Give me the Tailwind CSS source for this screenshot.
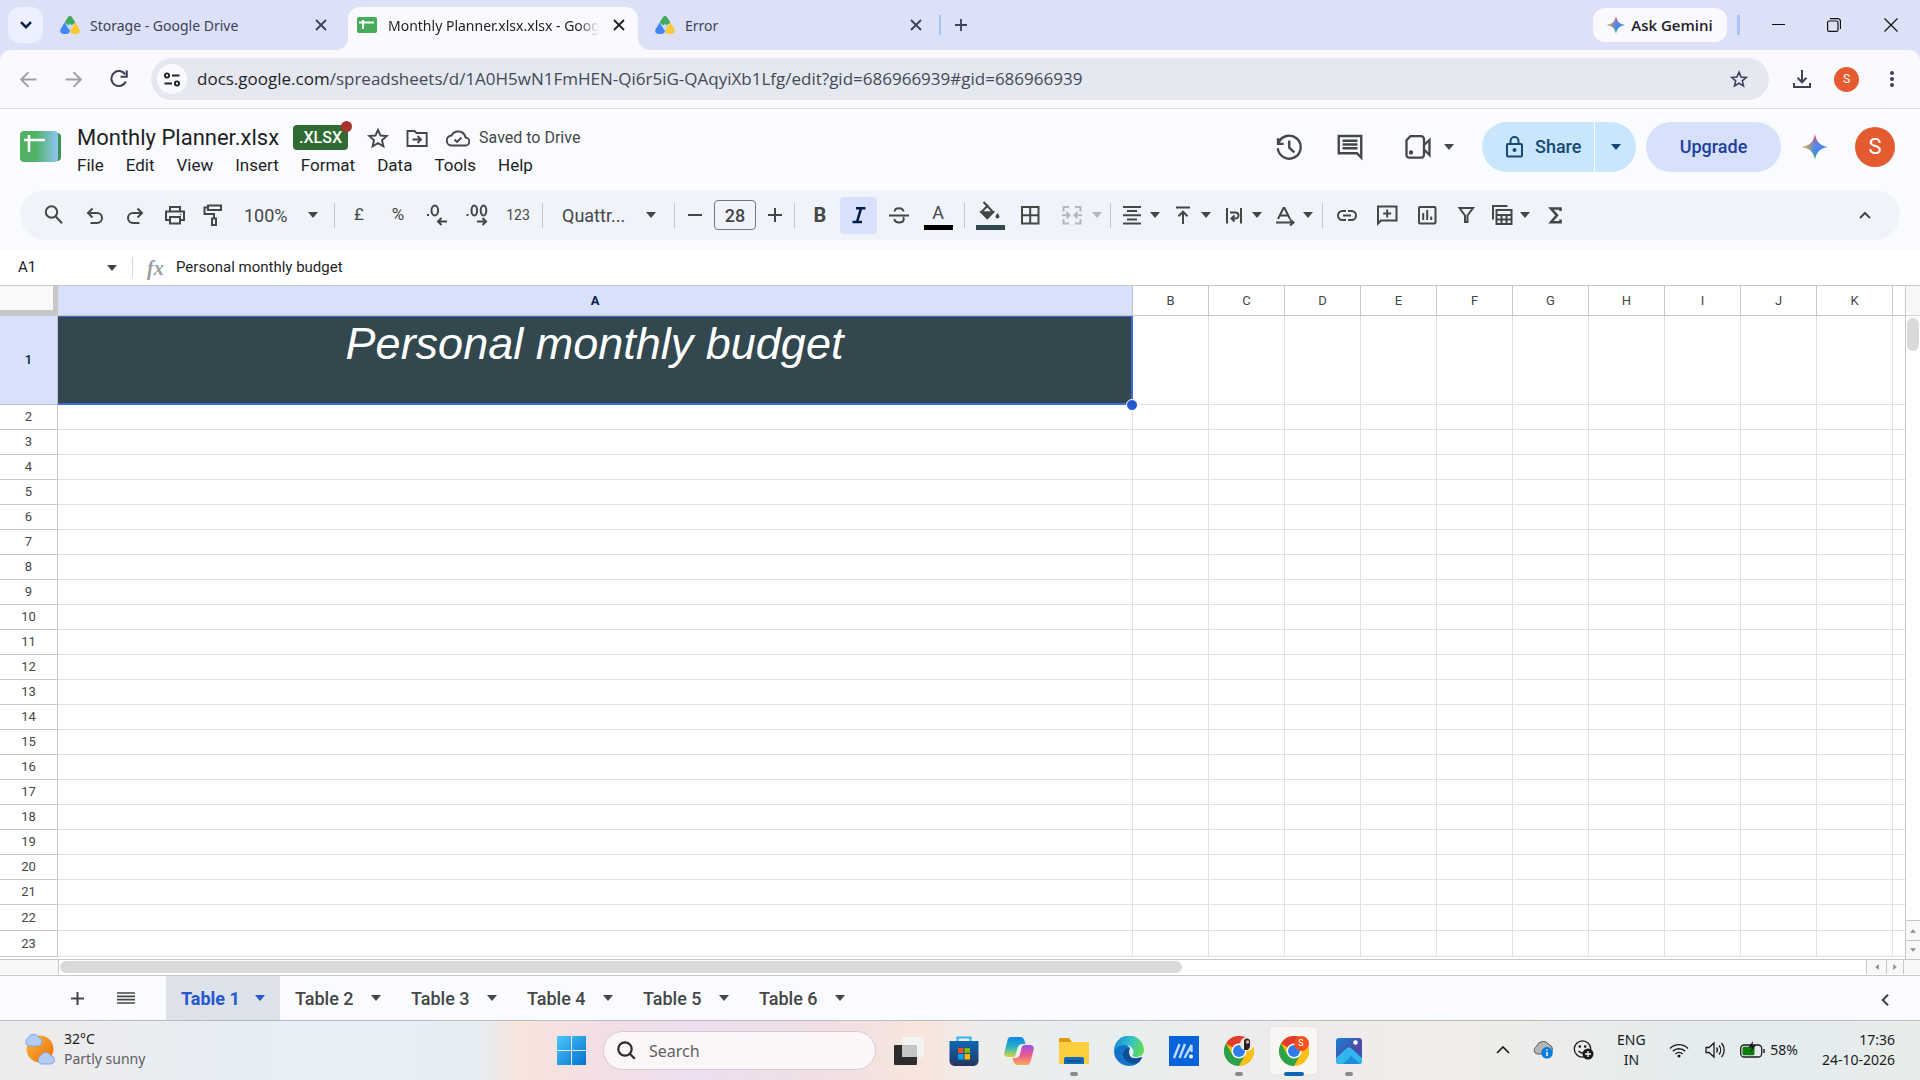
<!doctype html>
<html lang="en">

<head>
    <meta charset="UTF-8">
    <meta name="viewport" content="width=device-width, initial-scale=1.0">
    <script src="https://cdn.jsdelivr.net/npm/@tailwindcss/browser@4"></script>
    <title>Monthly Planner.xlsx - Google Sheets</title>
</head>

<body class="min-h-screen flex flex-col bg-white text-[#1f1f1f] font-['Roboto',sans-serif] overflow-hidden">
    <!-- Shared icons -->
    <svg class="absolute size-0">
        <defs>
            <linearGradient id="gemV" x1="0" y1="0" x2="0" y2="1">
                <stop offset="0" stop-color="#f23b34" />
                <stop offset=".4" stop-color="#5a86ea" />
                <stop offset=".65" stop-color="#4285f4" />
                <stop offset="1" stop-color="#34b853" />
            </linearGradient>
            <linearGradient id="gemH" x1="0" y1="0" x2="1" y2="0">
                <stop offset="0" stop-color="#fbbc04" />
                <stop offset=".5" stop-color="#fbbc04" stop-opacity="0" />
            </linearGradient>
            <linearGradient id="winFill" x1="0" y1="0" x2="1" y2="1">
                <stop offset="0" stop-color="#4cc8fb" />
                <stop offset="1" stop-color="#0370ce" />
            </linearGradient>
        </defs>
        <symbol id="arrow" viewBox="0 0 10 6">
            <path d="M0 0h10L5 6z" fill="currentColor" />
        </symbol>
        <symbol id="cross" viewBox="0 0 12 12">
            <path d="M1 1l10 10M11 1L1 11" stroke="currentColor" stroke-width="1.8" fill="none" />
        </symbol>
        <symbol id="drive" viewBox="0 0 20 20">
            <path d="M4.6 7.5L0.6 14.2C-.6 17 .8 19 3.500 19h3c2 0 3.500-1.500 3.500-3.500z" fill="#4285f4" />
            <path d="M15.400 7.500l4 6.700C20.600 17 19.200 19 16.500 19h-3c-2 0-3.500-1.500-3.500-3.500z" fill="#fcc934" />
            <path d="M4.600 7.500L7.800 2.500C8.900.6 11.100.6 12.200 2.500l3.200 5-3.200 2.500H7.800z" fill="#41ab5d" />
            <path d="M7.300 12L10 8.500 12.700 12 10 15.500z" fill="#c7daf9" />
        </symbol>
        <symbol id="gemini" viewBox="0 0 24 24">
            <path d="M12 0c1 7 5 11 12 12-7 1-11 5-12 12-1-7-5-11-12-12C7 11 11 7 12 0z" fill="url(#gemV)" />
            <path d="M12 0c1 7 5 11 12 12-7 1-11 5-12 12-1-7-5-11-12-12C7 11 11 7 12 0z" fill="url(#gemH)" />
        </symbol>
        <symbol id="star" viewBox="0 0 24 24">
            <path d="M12 3.800l2.500 5.700 6.200.600-4.700 4.100 1.400 6.100L12 17.100l-5.400 3.200L8 14.200 3.300 10.100l6.200-.600z"
                fill="none" stroke="currentColor" stroke-width="1.900" />
        </symbol>
        <symbol id="chrome" viewBox="0 0 30 30">
            <circle cx="15" cy="15" r="15" fill="#fbbc04" />
            <path d="M15 15L2 7.500A15 15 0 0 1 28 7.500H15z" fill="#e33b2e" />
            <path d="M2 7.500A15 15 0 0 0 15 30l6.500-11.200L15 15 8.500 18.800z" fill="#2ba24c" />
            <path d="M21.500 18.800L15 30A15 15 0 0 0 28 7.500H15z" fill="#fbc116" />
            <circle cx="15" cy="15" r="7.500" fill="#fff" />
            <circle cx="15" cy="15" r="6" fill="#2f7de9" />
        </symbol>
    </svg>

    <!-- Browser tabs -->
    <div class="h-[50px] flex items-center pl-2 bg-[#dce1f7] text-[#3c4257] font-['Noto_Sans',sans-serif] text-[14px]">
        <button aria-label="Search tabs" class="w-[35px] h-9 rounded-xl bg-[#edf0fe] flex items-center justify-center">
            <svg class="w-3 h-2" viewBox="0 0 12 8" fill="none" stroke="#041e49" stroke-width="2.400"><path d="M1 1.200l5 5 5-5" /></svg>
        </button>
        <div class="w-[305px] h-full pl-[17px] pr-[21px] flex items-center">
            <svg class="size-5"><use href="#drive" /></svg>
            <span class="ml-[10px] flex-1 whitespace-nowrap">Storage - Google Drive</span>
            <button aria-label="Close tab"><svg class="size-3"><use href="#cross" /></svg></button>
        </div>
        <div class="relative w-[290px] h-[43px] self-end rounded-t-xl bg-[#faf9ff] text-[#1f1f1f] pl-[9px] pr-[13px] pb-[7px] flex items-center">
            <svg class="absolute -left-3 bottom-0 size-3" viewBox="0 0 12 12"><path d="M12 0v12H0A12 12 0 0 0 12 0z" fill="#faf9ff" /></svg>
            <svg class="absolute -right-3 bottom-0 size-3" viewBox="0 0 12 12"><path d="M0 0v12h12A12 12 0 0 1 0 0z" fill="#faf9ff" /></svg>
            <svg class="w-5 h-4" viewBox="0 0 20 16">
                <rect width="20" height="16" rx="2" fill="#45ac58" />
                <path d="M2 5.500h15M6 3v9" stroke="#fff" stroke-width="2" />
            </svg>
            <span class="ml-[11px] w-[211px] overflow-hidden whitespace-nowrap mask-r-from-90%">Monthly Planner.xlsx.xlsx - Google Sheets</span>
            <button aria-label="Close tab" class="ml-auto"><svg class="size-3"><use href="#cross" /></svg></button>
        </div>
        <div class="w-[301px] h-full pl-[17px] pr-[17px] flex items-center">
            <svg class="size-5"><use href="#drive" /></svg>
            <span class="ml-[10px] flex-1">Error</span>
            <button aria-label="Close tab"><svg class="size-3"><use href="#cross" /></svg></button>
        </div>
        <span class="w-0.5 h-5 bg-[#a8c2fb]"></span>
        <button aria-label="New tab" class="ml-[14px]">
            <svg class="size-3" viewBox="0 0 12 12" stroke="currentColor" stroke-width="1.800"><path d="M6 0v12M0 6h12" /></svg>
        </button>
        <button class="ml-auto h-[34px] w-[134px] rounded-xl bg-[#faf9ff] text-[#1f1f1f] font-semibold flex items-center justify-center gap-1.5 text-[15px] font-['Open_Sans',sans-serif]">
            <svg class="size-[18px]"><use href="#gemini" /></svg>Ask Gemini
        </button>
        <span class="ml-[10px] w-[3px] h-5 bg-[#a8c2fb]"></span>
        <div class="ml-[10px] flex text-[#111]">
            <button aria-label="Minimize" class="w-14 h-9 flex items-center justify-center">
                <svg class="w-[13px] h-3" viewBox="0 0 13 12" stroke="currentColor"><path d="M0 5.500h13" /></svg>
            </button>
            <button aria-label="Restore" class="w-14 h-9 flex items-center justify-center">
                <svg class="size-[14px]" viewBox="0 0 14 14" fill="none" stroke="currentColor" stroke-width="1.200">
                    <rect x=".6" y="3" width="10.400" height="10.400" rx="1.500" />
                    <path d="M3 .6h7.500a3 3 0 0 1 3 3V11" />
                </svg>
            </button>
            <button aria-label="Close window" class="w-[58px] h-9 flex items-center justify-center">
                <svg class="size-[14px]" viewBox="0 0 14 14" stroke="currentColor" stroke-width="1.200"><path d="M.5.5l13 13M13.500.5l-13 13" /></svg>
            </button>
        </div>
    </div>

    <!-- Address bar -->
    <div class="bg-[#dce1f7]">
        <div class="h-[59px] flex items-center rounded-t-[10px] bg-[#faf9ff] border-b border-[#dcdfe5] text-[#3c4257] pl-[6px] pr-1.5">
            <button aria-label="Back" class="w-[45px] flex justify-center text-[#9fa0a8]">
                <svg class="size-[17px]" viewBox="0 0 17 17" fill="none" stroke="currentColor" stroke-width="1.900"><path d="M16.500 8.500H1.500M8.500 1.200L1.200 8.500l7.300 7.300" /></svg>
            </button>
            <button aria-label="Forward" class="w-[45px] flex justify-center text-[#9fa0a8]">
                <svg class="size-[17px]" viewBox="0 0 17 17" fill="none" stroke="currentColor" stroke-width="1.900"><path d="M.5 8.500h15M8.500 1.200l7.300 7.300-7.300 7.300" /></svg>
            </button>
            <button aria-label="Reload" class="w-[45px] flex justify-center">
                <svg class="size-[18px]" viewBox="0 0 18 18" fill="none" stroke="currentColor" stroke-width="2"><path d="M15.800 11.500A7.500 7.500 0 1 1 15.200 4.500M16.800.5v6.300h-6.300" /></svg>
            </button>
            <div class="ml-[10px] flex-1 h-[42px] rounded-full bg-[#e5e8f1] pl-1.5 pr-5 flex items-center">
                <button aria-label="Site information" class="size-[30px] rounded-full bg-[#faf9ff] flex items-center justify-center text-[#1f1f1f]">
                    <svg class="w-4 h-[15px]" viewBox="0 0 16 15" fill="none" stroke="currentColor" stroke-width="1.900">
                        <circle cx="3" cy="3.500" r="2.100" /><path d="M8 3.500h7.500M.5 11.500H8" /><circle cx="13" cy="11.500" r="2.100" />
                    </svg>
                </button>
                <div class="ml-[10px] flex-1 font-['Open_Sans',sans-serif] text-[17px] text-[#444955] whitespace-nowrap"><span class="text-[#1f1f1f]">docs.google.com</span>/spreadsheets/d/1A0H5wN1FmHEN-Qi6r5iG-QAqyiXb1Lfg/edit?gid=686966939#gid=686966939</div>
                <button aria-label="Bookmark this tab"><svg class="size-5"><use href="#star" /></svg></button>
            </div>
            <button aria-label="Downloads" class="ml-[10px] w-[45px] flex justify-center">
                <svg class="size-[18px]" viewBox="0 0 18 18" fill="none" stroke="currentColor" stroke-width="2"><path d="M9 0v12M4.500 7.800L9 12.300l4.500-4.500M1 13v4h16v-4" /></svg>
            </button>
            <button aria-label="Profile" class="ml-[10px] size-[25px] rounded-full bg-[#e35b2f] text-white text-[12px]">S</button>
            <button aria-label="Menu" class="ml-[10px] w-[45px] flex justify-center">
                <svg class="w-1 h-4" viewBox="0 0 4 16" fill="currentColor"><circle cx="2" cy="2" r="2" /><circle cx="2" cy="8" r="2" /><circle cx="2" cy="14" r="2" /></svg>
            </button>
        </div>
    </div>

    <div class="bg-[#f9fbff] pb-[10px]">
        <!-- Document header -->
        <header class="h-[81px] flex items-center pl-5 pr-[25px] pb-[6px] text-[#444746]">
            <svg class="w-[41px] h-[31px]" viewBox="0 0 41 31">
                <defs>
                    <linearGradient id="logoFill"><stop offset=".4" stop-color="#4fb163" /><stop offset="1" stop-color="#8fc4f8" /></linearGradient>
                </defs>
                <rect x="5" y="2" width="36" height="28" rx="4" fill="#3c9450" />
                <rect width="38" height="31" rx="4" fill="url(#logoFill)" />
                <path d="M4 9h21M9 4v17" stroke="#fff" stroke-width="2.600" />
            </svg>
            <div class="ml-4 mt-[10px]">
                <div class="h-7 flex items-center">
                    <h1 class="text-[22px] leading-7 text-[#1f1f1f]">Monthly Planner.xlsx</h1>
                    <span class="relative ml-[14px] w-[55px] h-[25px] rounded bg-[#2f6b33] text-white text-[16px] font-medium flex items-center justify-center">.XLSX
                        <span class="absolute -right-1 -top-1 size-[11px] rounded-full bg-[#a8332a]"></span>
                    </span>
                    <button aria-label="Star" class="ml-[18px]"><svg class="size-6"><use href="#star" /></svg></button>
                    <button aria-label="Move" class="ml-[15px]">
                        <svg class="size-6" viewBox="0 0 24 24" fill="none" stroke="currentColor" stroke-width="1.900"><path d="M2.500 20V5h7l2 2h10.200v13zM7.500 13.500h8M12.500 10l3.500 3.500-3.500 3.500" /></svg>
                    </button>
                    <button aria-label="Document status" class="ml-[17px] flex items-center gap-[9px] text-[16px]">
                        <svg class="size-6" viewBox="0 0 24 24" fill="none" stroke="currentColor" stroke-width="1.900"><path d="M6 19.500h13a4 4 0 0 0 .5-8A7.500 7.500 0 0 0 5.500 9.500 5 5 0 0 0 6 19.500zM8.500 13.500l2.500 2.500 4.500-4.500" /></svg>
                        Saved to Drive
                    </button>
                </div>
                <nav class="h-7 flex items-center gap-[22px] text-[17px] text-[#1f1f1f]">
                    <button>File</button>
                    <button>Edit</button>
                    <button>View</button>
                    <button>Insert</button>
                    <button>Format</button>
                    <button>Data</button>
                    <button>Tools</button>
                    <button>Help</button>
                </nav>
            </div>
            <button aria-label="Version history" class="ml-auto w-[62px] flex justify-center">
                <svg class="size-[30px]" viewBox="0 0 24 24" fill="none" stroke="currentColor" stroke-width="1.900"><path d="M3.200 5v4.500h4.500M3.500 9A9.200 9.200 0 1 1 3 13M12.200 6.800v5.700l4 3.800" /></svg>
            </button>
            <button aria-label="Comments" class="w-[60px] flex justify-center">
                <svg class="size-[30px]" viewBox="0 0 24 24" fill="none" stroke="currentColor" stroke-width="1.900"><path d="M3 3.200h18v17.300l-3.500-3.500H3zM6 7h12M6 10h12M6 13h12" /></svg>
            </button>
            <button aria-label="Join a call" class="ml-[25px] mr-[28px] flex items-center gap-[13px]">
                <svg class="w-[26px] h-[26px]" viewBox="0 0 26 26" fill="none" stroke="currentColor" stroke-width="2.300"><path d="M5.500 2.200h10.500a3 3 0 0 1 3 3v15.500a3 3 0 0 1-3 3h-12a2.500 2.500 0 0 1-2.500-2.500V6.200zM19 11l5.500-5v15L19 15.500" /><circle cx="6" cy="18.500" r="1" fill="currentColor" /></svg>
                <svg class="w-[10px] h-[6px]"><use href="#arrow" /></svg>
            </button>
            <div class="h-[50px] flex rounded-full overflow-hidden bg-[#c9e6fd] text-[#164a77]">
                <button class="w-[112px] pl-6 flex items-center gap-3 text-[18px] font-medium">
                    <svg class="w-[17px] h-[22px]" viewBox="0 0 17 22" fill="none" stroke="currentColor" stroke-width="2"><rect x="1" y="8" width="15" height="12.500" rx="1" /><path d="M4.500 8V5a4 4 0 0 1 8 0v3" /><circle cx="8.500" cy="14" r="1" fill="currentColor" /></svg>
                    Share
                </button>
                <button aria-label="Share options" class="w-[42px] border-l border-white flex items-center justify-center">
                    <svg class="w-[10px] h-[6px]"><use href="#arrow" /></svg>
                </button>
            </div>
            <button class="ml-[10px] w-[135px] h-[50px] rounded-full bg-[#d7e1fb] text-[#1d3f9e] text-[18px] font-medium">Upgrade</button>
            <button aria-label="Gemini" class="ml-[21px]"><svg class="size-[26px]"><use href="#gemini" /></svg></button>
            <button aria-label="Account" class="ml-[27px] size-10 rounded-full bg-[#e35b2f] text-white text-[22px]">S</button>
        </header>

        <!-- Toolbar -->
        <div class="mx-5 h-[50px] rounded-full bg-[#f0f3f9] text-[#444746] flex items-center pl-3 text-[18px] [&_button]:h-[37px] [&_button]:shrink-0 [&_button]:flex [&_button]:items-center [&_button]:justify-center">
            <button aria-label="Search the menus" class="w-[43px]">
                <svg class="size-6" viewBox="0 0 24 24" fill="none" stroke="currentColor" stroke-width="2"><circle cx="9.500" cy="9" r="5.700" /><path d="M13.500 13.200l6.500 7" /></svg>
            </button>
            <button aria-label="Undo" class="w-10">
                <svg class="size-6" viewBox="0 0 24 24" fill="none" stroke="currentColor" stroke-width="2"><path d="M7.500 20H14a5 5 0 0 0 0-10H5.500M9.500 5.500L5 10l4.500 4.500" /></svg>
            </button>
            <button aria-label="Redo" class="w-10">
                <svg class="size-6" viewBox="0 0 24 24" fill="none" stroke="currentColor" stroke-width="2"><path d="M16.500 20H10a5 5 0 0 1 0-10h8.500M14.500 5.500L19 10l-4.500 4.500" /></svg>
            </button>
            <button aria-label="Print" class="w-10">
                <svg class="size-6" viewBox="0 0 24 24" fill="none" stroke="currentColor" stroke-width="2"><path d="M7 17H3V8.500h18V17h-4M7 8V4h10v4M7 14h10v6.500H7z" /><circle cx="17.800" cy="11.500" r=".7" fill="currentColor" stroke="none" /></svg>
            </button>
            <button aria-label="Paint format" class="w-9">
                <svg class="size-6" viewBox="0 0 24 24" fill="none" stroke="currentColor" stroke-width="2"><path d="M7 2.500h13v4.500H7zM7 4.500H3.500V11H13v4M11 15.500h4V22h-4z" /></svg>
            </button>
            <label class="relative w-[103px] flex items-center">
                <select aria-label="Zoom" class="appearance-none w-full pl-[13px] outline-none"><option>100%</option></select>
                <svg class="absolute right-4 w-[10px] h-[6px] pointer-events-none"><use href="#arrow" /></svg>
            </label>
            <span class="w-px h-[25px] bg-[#c7c7c7]"></span>
            <button aria-label="Format as currency" class="ml-1 w-10 text-[17px]">£</button>
            <button aria-label="Format as per cent" class="w-[38px] text-[17px]">%</button>
            <button aria-label="Decrease decimal places" class="w-10">
                <svg class="w-[22px] h-6" viewBox="0 0 22 24" fill="none" stroke="currentColor" stroke-width="2"><ellipse cx="8.800" cy="7.500" rx="3.300" ry="5" /><path d="M1 12h2M21 18.500H12M15.500 15L12 18.500l3.500 3.500" /></svg>
            </button>
            <button aria-label="Increase decimal places" class="w-10">
                <svg class="w-[22px] h-6" viewBox="0 0 22 24" fill="none" stroke="currentColor" stroke-width="2"><ellipse cx="8.300" cy="7.500" rx="2.800" ry="5" /><ellipse cx="17.500" cy="7.500" rx="2.800" ry="5" /><path d="M.5 12h2M11 18.500h9M16.500 15l3.500 3.500-3.500 3.500" /></svg>
            </button>
            <button aria-label="More formats" class="w-[42px] text-[14px]">123</button>
            <span class="ml-[3px] w-px h-[25px] bg-[#c7c7c7]"></span>
            <label class="relative w-[131px] flex items-center">
                <select aria-label="Font" class="appearance-none w-full pl-[19px] outline-none"><option>Quattr...</option></select>
                <svg class="absolute right-[18px] w-[10px] h-[6px] pointer-events-none"><use href="#arrow" /></svg>
            </label>
            <span class="w-px h-[25px] bg-[#c7c7c7]"></span>
            <button aria-label="Decrease font size" class="w-[39px]">
                <svg class="size-[14px]" viewBox="0 0 14 14" stroke="currentColor" stroke-width="2"><path d="M0 7h14" /></svg>
            </button>
            <input aria-label="Font size" value="28" class="w-[42px] h-[30px] rounded border border-[#747775] text-center font-medium outline-none">
            <button aria-label="Increase font size" class="w-[38px]">
                <svg class="size-[14px]" viewBox="0 0 14 14" stroke="currentColor" stroke-width="2"><path d="M0 7h14M7 0v14" /></svg>
            </button>
            <span class="w-px h-[25px] bg-[#c7c7c7]"></span>
            <button aria-label="Bold" class="ml-[5px] w-10 text-[20px] font-bold">B</button>
            <button aria-label="Italic" class="w-[37px] rounded bg-[#d7e1fb] text-[#041e49]">
                <svg class="size-6" viewBox="0 0 24 24" fill="none" stroke="currentColor" stroke-width="2.600"><path d="M9 5.300h9.500M5.500 19H15M14 5.300L10 19" /></svg>
            </button>
            <button aria-label="Strikethrough" class="ml-0.5 w-10">
                <svg class="size-6" viewBox="0 0 24 24" fill="none" stroke="currentColor" stroke-width="2"><path d="M2 12.500h20M16.500 8.500C16 6 14 5.200 12 5.200c-2.500 0-4.300 1.300-4.300 3.300M7.300 16c.5 2.500 2.500 3.500 4.700 3.500 2.700 0 4.700-1.300 4.700-3.500 0-.8-.2-1.300-.6-1.800" /></svg>
            </button>
            <button aria-label="Text colour" class="w-[38px] flex-col">
                <span class="text-[18px] leading-6">A</span>
                <span class="w-[29px] h-[5px] bg-black"></span>
            </button>
            <span class="ml-[7px] w-px h-[25px] bg-[#c7c7c7]"></span>
            <button aria-label="Fill colour" class="ml-[6px] w-[38px] flex-col">
                <svg class="w-[22px] h-6" viewBox="0 0 22 24" fill="none" stroke="currentColor" stroke-width="2"><path d="M4.500 1l9.500 10-5.700 6L2.500 11l6-6.200z" /><path d="M2.500 11.200h11.500L8.300 17z" fill="currentColor" /><path d="M18.500 12c1.300 1.800 2 2.700 2 3.600a2 2 0 0 1-4 0c0-.9.700-1.800 2-3.600z" fill="currentColor" stroke="none" /></svg>
                <span class="w-[29px] h-[5px] bg-[#33474e]"></span>
            </button>
            <button aria-label="Borders" class="w-[42px]">
                <svg class="size-6" viewBox="0 0 24 24" fill="none" stroke="currentColor" stroke-width="2"><path d="M4 4h16.500v16.500H4zM12.200 4v16.500M4 12.200h16.500" /></svg>
            </button>
            <button aria-label="Merge cells" class="ml-1 w-[52px] gap-2 text-[#b4b7bb]">
                <svg class="size-6 shrink-0" viewBox="0 0 24 24" fill="none" stroke="currentColor" stroke-width="2"><path d="M9 4H3.500v4.500M15 4h5.500v4.500M9 20.500H3.500V16M15 20.500h5.500V16M2 12.200h7M6.500 9l3 3.200-3 3.200M22 12.200h-7M17.500 9l-3 3.200 3 3.200" /></svg>
                <svg class="w-[10px] h-[6px] shrink-0"><use href="#arrow" /></svg>
            </button>
            <span class="ml-[3px] w-px h-[25px] bg-[#c7c7c7]"></span>
            <button aria-label="Horizontal align" class="ml-[3px] w-[51px] gap-[6px]">
                <svg class="size-6 shrink-0" viewBox="0 0 24 24" fill="none" stroke="currentColor" stroke-width="2"><path d="M3 4h18M7 8h10M3 12.200h18M7 16.500h10M3 20.500h18" /></svg>
                <svg class="w-[10px] h-[6px] shrink-0"><use href="#arrow" /></svg>
            </button>
            <button aria-label="Vertical align" class="w-[51px] gap-[6px]">
                <svg class="size-6 shrink-0" viewBox="0 0 24 24" fill="none" stroke="currentColor" stroke-width="2"><path d="M5 4.500h14M12 21V9M7.500 13.200L12 8.700l4.500 4.500" /></svg>
                <svg class="w-[10px] h-[6px] shrink-0"><use href="#arrow" /></svg>
            </button>
            <button aria-label="Text wrapping" class="w-[51px] gap-[6px]">
                <svg class="size-6 shrink-0" viewBox="0 0 24 24" fill="none" stroke="currentColor" stroke-width="2"><path d="M5 5v15.500M19 5v15.500M8 9.500h5.500a3 3 0 0 1 0 6H10M12.500 12.500l-3 3 3 3" /></svg>
                <svg class="w-[10px] h-[6px] shrink-0"><use href="#arrow" /></svg>
            </button>
            <button aria-label="Text rotation" class="w-[51px] gap-[6px]">
                <svg class="size-6 shrink-0" viewBox="0 0 24 24" fill="none" stroke="currentColor" stroke-width="2"><path d="M5 16L10.500 5h1L17 16M7 12.500h8M3 19.500h17M17 16.500l3.500 3-3.500 3" /></svg>
                <svg class="w-[10px] h-[6px] shrink-0"><use href="#arrow" /></svg>
            </button>
            <span class="ml-1 w-px h-[25px] bg-[#c7c7c7]"></span>
            <button aria-label="Insert link" class="ml-1 w-10">
                <svg class="size-6" viewBox="0 0 24 24" fill="none" stroke="currentColor" stroke-width="2"><path d="M11 17H7.500a4.500 4.500 0 0 1 0-9H11M13 17h3.500a4.500 4.500 0 0 0 0-9H13M8 12.500h8" /></svg>
            </button>
            <button aria-label="Insert comment" class="w-10">
                <svg class="size-6" viewBox="0 0 24 24" fill="none" stroke="currentColor" stroke-width="2"><path d="M3 20.500V3.500h18.500V17.500H6zM12.200 6.500v8M8.200 10.500h8" /></svg>
            </button>
            <button aria-label="Insert chart" class="w-[39px]">
                <svg class="size-6" viewBox="0 0 24 24" fill="none" stroke="currentColor" stroke-width="2"><rect x="4" y="4" width="16.500" height="16.500" rx="1" /><path d="M8.200 10v7M12.200 7v10M16.200 13.500V17" /></svg>
            </button>
            <button aria-label="Create a filter" class="w-[39px]">
                <svg class="size-6" viewBox="0 0 24 24" fill="none" stroke="currentColor" stroke-width="2"><path d="M5.500 5h13.500l-5.500 7.500V19h-2.500v-6.500z" /></svg>
            </button>
            <button aria-label="Table views" class="w-[50px] gap-[6px]">
                <svg class="size-6 shrink-0" viewBox="0 0 24 24" fill="none" stroke="currentColor" stroke-width="2"><path d="M3 16.500V3h14.500M6.500 7h15v14h-15zM6.500 12h15M6.500 16.500h15M11.500 12v9M16.500 12v9" /></svg>
                <svg class="w-[10px] h-[6px] shrink-0"><use href="#arrow" /></svg>
            </button>
            <button aria-label="Functions" class="w-10">
                <svg class="size-6" viewBox="0 0 24 24" fill="none" stroke="currentColor" stroke-width="2.600"><path d="M17.500 8V5.500H8l6 6.800-6 6.900h9.500V16.500" /></svg>
            </button>
            <button aria-label="Hide the menus" class="ml-auto mr-[15px] w-10">
                <svg class="w-3 h-2" viewBox="0 0 12 8" fill="none" stroke="currentColor" stroke-width="2"><path d="M1 7l5-5 5 5" /></svg>
            </button>
        </div>
    </div>

    <!-- Formula bar -->
    <div class="h-9 flex items-center border-b border-[#c7c7c7] text-[15px]">
        <label class="relative w-[132px] flex items-center">
            <input aria-label="Name box" value="A1" class="w-full pl-[18px] outline-none">
            <svg class="absolute right-[15px] w-[10px] h-[6px] text-[#444746]"><use href="#arrow" /></svg>
        </label>
        <span class="w-px h-[21px] bg-[#d5d7da]"></span>
        <span class="w-[43px] pl-[14px] font-['Liberation_Serif',serif] italic font-bold text-[20px] text-[#9a9da0]">fx</span>
        <input aria-label="Formula" value="Personal monthly budget" class="flex-1 outline-none">
    </div>

    <!-- Sheet grid -->
    <main class="flex-1 flex">
        <div class="flex-1 min-w-0 overflow-hidden border-r border-[#c7c7c7]">
            <table class="w-full table-fixed border-separate border-spacing-0 text-[13px] text-[#444746]">
                <colgroup>
                    <col class="w-[58px]">
                    <col class="w-[1075px]">
                    <col class="w-[76px]" span="10">
                    <col>
                </colgroup>
                <thead>
                    <tr id="letters" class="h-[30px]">
                        <th class="bg-[#f8f9fa] border-r-[5px] border-b-[6px] border-[#c7c7c7]"></th>
                        <th class="bg-[#d7e1fb] border-r border-b border-[#c0c3c9] font-bold text-[#041e49]">A</th>
                    </tr>
                </thead>
                <tbody id="rows">
                    <tr class="h-[89px]">
                        <th class="bg-[#d7e1fb] border-r border-b border-[#c0c3c9] font-medium text-[#041e49]">1</th>
                        <td class="relative p-0 align-top bg-[#33474e] border-2 border-t border-l-0 border-[#3d6ad6] text-center text-white italic text-[45px] leading-[54px] font-['Liberation_Sans',sans-serif]">Personal monthly budget
                            <span class="absolute -right-[7px] -bottom-[8px] z-10 size-3 rounded-full bg-[#2458cf] border border-white"></span>
                        </td>
                    </tr>
                </tbody>
            </table>
        </div>
        <!-- Vertical scrollbar -->
        <div class="w-[14px] flex flex-col">
            <div class="h-[30px] bg-[#f8f8f8] border-b border-[#d5d7da]"></div>
            <div class="mt-0.5 mx-px h-[33px] rounded-full bg-[#dadada]"></div>
            <button aria-label="Scroll up" class="mt-auto h-5 border-t border-[#c7c7c7] bg-[#f8f8f8] text-[#8d9093] flex items-center justify-center">
                <svg class="w-[6px] h-1 rotate-180"><use href="#arrow" /></svg>
            </button>
            <button aria-label="Scroll down" class="h-[19px] border-t border-[#c7c7c7] bg-[#f8f8f8] text-[#8d9093] flex items-center justify-center">
                <svg class="w-[6px] h-1"><use href="#arrow" /></svg>
            </button>
        </div>
    </main>

    <!-- Horizontal scrollbar -->
    <div class="h-[17px] flex items-start border-y border-[#c7c7c7] bg-white">
        <div class="w-[59px] h-[14px] bg-[#f8f8f8] border-r border-[#c7c7c7]"></div>
        <div class="ml-px mt-px w-[1122px] h-3 rounded-full bg-[#dadada]"></div>
        <button aria-label="Scroll left" class="ml-auto w-5 h-[14px] border-l border-[#c7c7c7] bg-[#f8f8f8] text-[#8d9093] flex items-center justify-center">
            <svg class="w-[6px] h-1 rotate-90"><use href="#arrow" /></svg>
        </button>
        <button aria-label="Scroll right" class="w-[18px] h-[14px] border-x border-[#c7c7c7] bg-[#f8f8f8] text-[#8d9093] flex items-center justify-center">
            <svg class="w-[6px] h-1 -rotate-90"><use href="#arrow" /></svg>
        </button>
        <div class="w-4 h-[14px] bg-[#f8f8f8]"></div>
    </div>

    <!-- Sheet tabs -->
    <div class="h-[45px] flex items-center border-b border-[#b9bdc2] bg-[#f9fbff] text-[#444746] pl-[52px]">
        <button aria-label="Add sheet" class="w-[50px] flex justify-center">
            <svg class="size-[13px]" viewBox="0 0 13 13" stroke="currentColor" stroke-width="2"><path d="M6.500 0v13M0 6.500h13" /></svg>
        </button>
        <button aria-label="All sheets" class="w-12 mr-4 flex justify-center">
            <svg class="w-[18px] h-3" viewBox="0 0 18 12" stroke="currentColor" stroke-width="1.700"><path d="M0 1h18M0 4.300h18M0 7.600h18M0 11h18" /></svg>
        </button>
        <div id="sheetTabs" class="h-full flex text-[18px] font-medium"></div>
        <button aria-label="Show side panel" class="ml-auto mr-[31px] pt-1">
            <svg class="w-2 h-3" viewBox="0 0 8 12" fill="none" stroke="currentColor" stroke-width="2.200"><path d="M7 .8L1.800 6 7 11.200" /></svg>
        </button>
    </div>

    <!-- Taskbar -->
    <footer class="h-[59px] grid grid-cols-[1fr_auto_1fr] items-center font-['Noto_Sans',sans-serif] text-[14px] leading-5 text-[#1b1b1b] bg-[linear-gradient(90deg,#ececee_0%,#ececee_4%,#e6eef6_14%,#e6eef6_22%,#e6edf1_25%,#f8e5dc_27%,#f3dfe4_31%,#ecdff0_36%,#f0dfe4_43%,#f8e5dc_48%,#eeecec_51%,#e8eeef_55%,#eeeceb_68%,#f0edea_76%,#e6ecec_86%,#e5ecf0_93%,#e8ede9_100%)]">
        <div class="h-full flex items-center pl-6">
            <svg class="w-8 h-9 mb-1" viewBox="0 0 32 36">
                <defs><linearGradient id="sun" x1="0" y1="0" x2="1" y2="1"><stop offset="0" stop-color="#f6bb35" /><stop offset="1" stop-color="#f0690f" /></linearGradient></defs>
                <circle cx="16" cy="18" r="13.500" fill="url(#sun)" />
                <path d="M5 15a4.500 4.500 0 0 1-.5-8.500 5.500 5.500 0 0 1 10 0A4.300 4.300 0 0 1 14 15z" fill="#b3cbf5" stroke="#86a8e6" />
                <path d="M17 33a4.500 4.500 0 0 1-.5-8 5.500 5.500 0 0 1 10-.5A4.300 4.300 0 0 1 27 33z" fill="#b3cbf5" stroke="#86a8e6" />
            </svg>
            <div class="ml-2 mb-1">
                <div>32°C</div>
                <div class="text-[#5c5d61]">Partly sunny</div>
            </div>
        </div>
        <div class="h-full flex items-center [&>button]:relative [&>button]:w-[55px] [&>button]:h-full [&>button]:flex [&>button]:items-center [&>button]:justify-center">
            <button aria-label="Start">
                <svg class="size-[29px]" viewBox="0 0 29 29"><path d="M0 0h14v14H0zM15 0h14v14H15zM0 15h14v14H0zM15 15h14v14H15z" fill="url(#winFill)" /></svg>
            </button>
            <label class="ml-1 mr-[5px] w-[273px] h-[39px] rounded-full bg-[#fbf7f9] border border-[#d9c9d0] flex items-center pl-[13px] gap-[13px]">
                <svg class="size-[19px]" viewBox="0 0 19 19" fill="none" stroke="#2b2b2b" stroke-width="2.200"><circle cx="8" cy="8" r="6.700" /><path d="M12.800 12.800l5 5" /></svg>
                <input aria-label="Search" placeholder="Search" class="w-[200px] text-[16px] outline-none placeholder:text-[#5f5f63]">
            </label>
            <button aria-label="Task view">
                <svg class="w-[30px] h-7" viewBox="0 0 30 28"><rect y="8" width="23" height="20" rx="1" fill="#2e2c2b" /><rect x="8" width="22" height="20" rx="1" fill="#f4f4f4" /><path d="M8 8h15v12H8z" fill="#c6c5c4" /></svg>
            </button>
            <button aria-label="Microsoft Store">
                <svg class="size-[30px]" viewBox="0 0 30 30">
                    <defs><linearGradient id="store" x1="0" y1="0" x2="0" y2="1"><stop offset="0" stop-color="#0e67b6" /><stop offset="1" stop-color="#26365f" /></linearGradient></defs>
                    <path d="M8.500 6V1.500h13V6" fill="none" stroke="#27b7f2" stroke-width="2" />
                    <path d="M.5 5h29v20a5 5 0 0 1-5 5h-19a5 5 0 0 1-5-5z" fill="url(#store)" />
                    <path d="M9 12h5.500v5H9z" fill="#f25022" /><path d="M15.500 12H21v5h-5.500z" fill="#7fba00" /><path d="M9 18h5.500v5.500H9z" fill="#00a4ef" /><path d="M15.500 18H21v5.500h-5.500z" fill="#ffb900" />
                </svg>
            </button>
            <button aria-label="Copilot">
                <svg class="size-[30px]" viewBox="0 0 30 30">
                    <defs>
                        <linearGradient id="cpA" x1="0" y1="0" x2="0" y2="1"><stop offset="0" stop-color="#0f86e8" /><stop offset=".5" stop-color="#27b3c6" /><stop offset="1" stop-color="#d8d63c" /></linearGradient>
                        <linearGradient id="cpB" x1="0" y1="0" x2="0" y2="1"><stop offset="0" stop-color="#9b53ea" /><stop offset=".5" stop-color="#ec5a8c" /><stop offset="1" stop-color="#fbaa5b" /></linearGradient>
                    </defs>
                    <path d="M7 1h9c3 0 4 2 4.600 4l.9 3h-3c-3 0-4 2-4.500 4l-1.500 6c-.6 2-1.500 3-3.500 3H4c-3 0-4.500-2-3.500-5L3.500 4c.6-2 1.500-3 3.500-3z" fill="url(#cpA)" />
                    <path d="M23 29h-9c-3 0-4-2-4.600-4l-.9-3h3c3 0 4-2 4.500-4l1.500-6c.6-2 1.500-3 3.500-3h5c3 0 4.500 2 3.500 5l-3 12c-.6 2-1.500 3-3.500 3z" fill="url(#cpB)" />
                    <path d="M13.500 12c.5-2 1.500-3 4.500-3l-2.500 9c-.5 2-1.500 3-4.500 3z" fill="#eef1f4" />
                </svg>
            </button>
            <button aria-label="File Explorer">
                <svg class="size-[30px]" viewBox="0 0 30 30"><path d="M0 2h10l3 4v6H0z" fill="#e09c0b" /><path d="M0 6h30v22H0z" fill="#fccd3c" /><path d="M5 28v-5a2 2 0 0 1 2-2h16a2 2 0 0 1 2 2v5z" fill="#0f6cb8" /><path d="M8 25h14" stroke="#0a4b85" stroke-width="1.500" /></svg>
                <span class="absolute bottom-1 w-2 h-1 rounded-full bg-[#8b8b8b]"></span>
            </button>
            <button aria-label="Edge">
                <svg class="size-[30px]" viewBox="0 0 30 30">
                    <defs><linearGradient id="edge" x1="0" y1=".3" x2="1" y2=".5"><stop offset="0" stop-color="#1e88d6" /><stop offset=".5" stop-color="#2fc0cf" /><stop offset="1" stop-color="#65dc52" /></linearGradient></defs>
                    <path d="M15 30A15 15 0 0 1 0 15c2-6 8-8 13-6l3 3c-3 1-4 6 0 9 3 2 8 1 12 0-2 6-7 9-13 9z" fill="#1372c9" />
                    <path d="M9 19c1 6 7 10 14 8 3-1 5-5 5-6-4 2-10 2-12-1-1-2-1.500-5 0-8-4 0-7 3-7 7z" fill="#0c4f94" />
                    <path d="M0 15A15 15 0 0 1 30 14c0 5-4 7-8 7-3 0-4-1-3-3 2-4-2-9-8-9C5 9 1 12 0 15z" fill="url(#edge)" />
                </svg>
            </button>
            <button aria-label="MyASUS">
                <svg class="size-[30px]" viewBox="0 0 30 30"><path d="M0 0h30v30H0z" fill="#0564da" /><path d="M5 22L10.500 8M10.500 22L16 8M15.500 22l7-13v7" fill="none" stroke="#c4dbfa" stroke-width="2.400" /><circle cx="22" cy="20.500" r="2" fill="#fff" /></svg>
            </button>
            <button aria-label="Chrome">
                <svg class="size-[30px]" viewBox="0 0 30 30"><use href="#chrome" /><circle cx="23" cy="8" r="7" fill="#ece9e4" /><path d="M20 14V6a3 3 0 0 1 6-1v6l-2 3z" fill="#2d221f" /><circle cx="23.500" cy="6" r="1.700" fill="#dcae97" /></svg>
                <span class="absolute bottom-1 w-2 h-1 rounded-full bg-[#8b8b8b]"></span>
            </button>
            <button aria-label="Chrome, active">
                <span class="absolute inset-x-[3px] top-[5px] bottom-[5px] rounded bg-[#f8f6f5] border border-[#e7e4e2]"></span>
                <svg class="relative size-[30px]" viewBox="0 0 30 30"><use href="#chrome" /><circle cx="22.500" cy="7.500" r="7.500" fill="#f4511e" /></svg>
                <span class="absolute left-[30px] top-[13px] w-[10px] text-[9px] leading-[18px] text-white font-['Roboto',sans-serif]">S</span>
                <span class="absolute bottom-1 w-5 h-1 rounded-full bg-[#0b66b5]"></span>
            </button>
            <button aria-label="Photos">
                <svg class="size-[26px]" viewBox="0 0 26 26">
                    <defs><linearGradient id="photo" x1="0" y1="0" x2="1" y2="1"><stop offset="0" stop-color="#1284d8" /><stop offset=".6" stop-color="#5048a4" /><stop offset="1" stop-color="#2360b4" /></linearGradient></defs>
                    <rect width="26" height="26" rx="3" fill="url(#photo)" />
                    <path d="M0 20L11 10q2-1.500 4 0l11 10v3a3 3 0 0 1-3 3H3a3 3 0 0 1-3-3z" fill="#31b6ee" /><path d="M7 26l8-8 9 7.500-1 .5z" fill="#1c8ddb" />
                    <circle cx="19.500" cy="4.500" r="2.300" fill="#fff" />
                </svg>
                <span class="absolute bottom-1 w-2 h-1 rounded-full bg-[#8b8b8b]"></span>
            </button>
        </div>
        <div class="h-full flex items-center justify-end pr-[25px] pb-0.5">
            <button aria-label="Hidden icons" class="w-10 flex justify-center">
                <svg class="w-[14px] h-2" viewBox="0 0 14 8" fill="none" stroke="currentColor" stroke-width="1.700"><path d="M1 7l6-6 6 6" /></svg>
            </button>
            <button aria-label="OneDrive" class="w-10 flex justify-center">
                <svg class="w-5 h-[19px]" viewBox="0 0 20 19"><path d="M4 14a4 4 0 0 1-.5-7.500 7 7 0 0 1 12.500-2A5 5 0 0 1 16 14z" fill="#b5b5b5" stroke="#5c5c5c" /><circle cx="14" cy="12.800" r="5.800" fill="#0b7bdc" /><path d="M14 12v4M14 9.500v1.300" stroke="#fff" stroke-width="1.500" /></svg>
            </button>
            <button aria-label="Emoji" class="w-10 flex justify-center">
                <svg class="w-[21px] h-5" viewBox="0 0 21 20" fill="none" stroke="#1b1b1b" stroke-width="1.300"><circle cx="9.500" cy="9" r="8.200" /><path d="M5.500 11q4 4 8 0" /><circle cx="6.800" cy="6.500" r=".7" fill="#1b1b1b" /><circle cx="12.200" cy="6.500" r=".7" fill="#1b1b1b" /><circle cx="15" cy="14" r="5.500" fill="#1b1b1b" stroke="none" /><path d="M15 11v6M12 14h6" stroke="#fff" /></svg>
            </button>
            <div class="w-14 text-center">
                <div>ENG</div>
                <div>IN</div>
            </div>
            <button aria-label="Wi-Fi" class="w-10 flex justify-center">
                <svg class="w-5 h-4" viewBox="0 0 20 16" fill="none" stroke="currentColor" stroke-width="1.400"><path d="M1 6.500a12.500 12.500 0 0 1 18 0M3.800 9.300a8.700 8.700 0 0 1 12.400 0M6.500 12a5 5 0 0 1 7 0" /><circle cx="10" cy="14" r="1.500" fill="currentColor" stroke="none" /></svg>
            </button>
            <button aria-label="Volume" class="w-8 flex justify-center">
                <svg class="w-[21px] h-[18px]" viewBox="0 0 21 18" fill="none" stroke="currentColor" stroke-width="1.300"><path d="M1 6.500h3L9 2v14l-5-4.500H1zM11.500 6.500a4 4 0 0 1 0 5M14 4.500a7 7 0 0 1 0 9M16.500 2a10.500 10.500 0 0 1 0 14" /></svg>
            </button>
            <div class="ml-[9px] flex items-center gap-[5px]">
                <svg class="w-[25px] h-[17px]" viewBox="0 0 25 17"><rect x=".7" y="4" width="21" height="12" rx="3.500" fill="none" stroke="#1b1b1b" stroke-width="1.300" /><path d="M24 8v4" stroke="#1b1b1b" stroke-width="1.500" /><rect x="2.500" y="5.800" width="12" height="8.400" rx="1.500" fill="#107c10" /><path d="M13 0L8.500 6.500H12L10.500 11 16 4.500h-3.500z" fill="#1b1b1b" /></svg>
                58%
            </div>
            <div class="w-[97px] text-right">
                <div>17:36</div>
                <div>24-10-2026</div>
            </div>
        </div>
    </footer>

    <script>
        const letters = document.getElementById("letters");
        const rows = document.getElementById("rows");
        const sheetTabs = document.getElementById("sheetTabs");
        const emptyCells = '<td class="border-r border-b border-[#e1e1e1]"></td>'.repeat(10) + '<td class="border-b border-[#e1e1e1]"></td>';

        "BCDEFGHIJK".split("").forEach((letter) => {
            letters.innerHTML += `<th class="border-r border-b border-[#c7c7c7] font-normal">${letter}</th>`;
        });
        letters.innerHTML += '<th class="border-b border-[#c7c7c7]"></th>';
        rows.rows[0].innerHTML += emptyCells;

        for (let i = 2; i <= 23; i++) {
            const height = i > 21 ? "h-[26px]" : "h-[25px]";
            rows.insertAdjacentHTML("beforeend", `<tr class="${height}">
                <th class="p-0 border-r border-b border-[#c7c7c7] font-normal">${i}</th>
                <td class="border-r border-b border-[#e1e1e1]"></td>${emptyCells}</tr>`);
        }

        for (let i = 1; i <= 6; i++) {
            const look = i === 1 ? "w-[114px] bg-[#dde2ea] text-[#2458cf] font-bold" : "w-[116px]";
            sheetTabs.innerHTML += `<button class="${look} pl-[15px] pr-[15px] flex items-center justify-between">Table ${i}
                <svg class="w-[10px] h-[6px]"><use href="#arrow" /></svg></button>`;
        }
    </script>
</body>

</html>
